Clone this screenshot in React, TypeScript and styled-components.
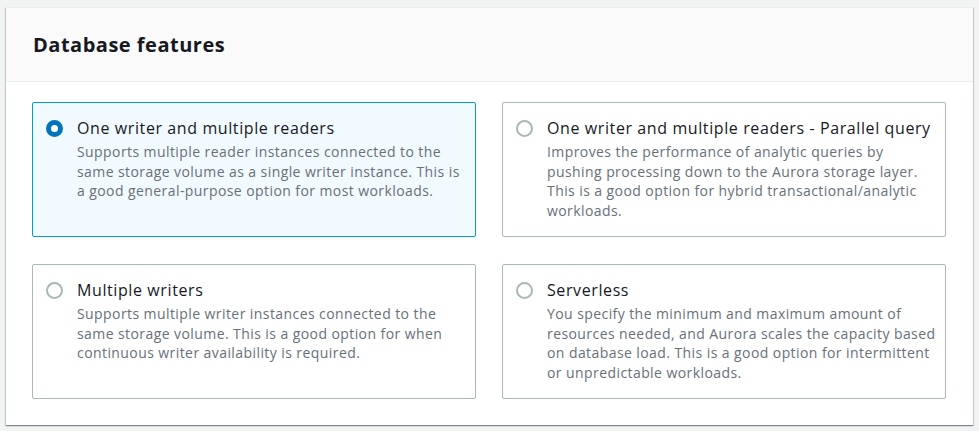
import React from "react";
import styled, { createGlobalStyle } from "styled-components";

const Global = createGlobalStyle`
  html, body { margin: 0; padding: 0; background: #f2f3f3; }
  body { font-family: "Open Sans", "Noto Sans", Arial, sans-serif; color: #16191f; }
  * { box-sizing: border-box; }
`;

const Page = styled.div`
  padding: 7px 6px;
`;

const Panel = styled.section`
  background: #fff;
  border-top: 1px solid #eaeded;
  box-shadow: 0 1px 1px 0 rgba(0, 28, 36, 0.3), 1px 1px 1px 0 rgba(0, 28, 36, 0.15),
    -1px 1px 1px 0 rgba(0, 28, 36, 0.15);
`;

const Header = styled.header`
  height: 74px;
  display: flex;
  align-items: center;
  padding: 0 27px;
  background: #fafafa;
  border-bottom: 1px solid #eaeded;
`;

const Title = styled.h2`
  margin: 0;
  font-size: 20px;
  font-weight: 700;
  letter-spacing: 0.5px;
  color: #16191f;
`;

const Grid = styled.div`
  display: grid;
  grid-template-columns: 444px 444px;
  column-gap: 26px;
  row-gap: 27px;
  padding: 20px 26px 26px;
`;

const Card = styled.label<{ $selected?: boolean }>`
  display: flex;
  align-items: flex-start;
  gap: 14px;
  height: 135px;
  padding: 14px 8px 14px 13px;
  border: 1px solid ${(p) => (p.$selected ? "#00a1c9" : "#aab7b8")};
  background: ${(p) => (p.$selected ? "#f1faff" : "#fff")};
  border-radius: 2px;
  cursor: pointer;
`;

const Radio = styled.span<{ $checked?: boolean }>`
  flex: none;
  width: 17px;
  height: 17px;
  margin-top: 2.5px;
  border-radius: 50%;
  background: #fff;
  border: ${(p) => (p.$checked ? "5px solid #0073bb" : "2px solid #aab7b8")};
`;

const Texts = styled.div`
  display: flex;
  flex-direction: column;
  flex: 1;
  min-width: 0;
`;

const OptionTitle = styled.div`
  font-size: 16px;
  line-height: 22px;
  letter-spacing: 0.6px;
  color: #16191f;
  margin-bottom: 3px;
`;

const OptionDesc = styled.div`
  font-size: 14px;
  line-height: 19.5px;
  letter-spacing: 0.42px;
  color: #687078;
`;

const options = [
  {
    title: "One writer and multiple readers",
    desc: "Supports multiple reader instances connected to the same storage volume as a single writer instance. This is a good general-purpose option for most workloads.",
    selected: true,
  },
  {
    title: "One writer and multiple readers - Parallel query",
    desc: "Improves the performance of analytic queries by pushing processing down to the Aurora storage layer. This is a good option for hybrid transactional/analytic workloads.",
  },
  {
    title: "Multiple writers",
    desc: "Supports multiple writer instances connected to the same storage volume. This is a good option for when continuous writer availability is required.",
  },
  {
    title: "Serverless",
    desc: "You specify the minimum and maximum amount of resources needed, and Aurora scales the capacity based on database load. This is a good option for intermittent or unpredictable workloads.",
  },
];

export default function App() {
  return (
    <>
      <Global />
      <Page>
        <Panel>
          <Header>
            <Title>Database features</Title>
          </Header>
          <Grid>
            {options.map((o) => (
              <Card key={o.title} $selected={o.selected}>
                <Radio $checked={o.selected} />
                <Texts>
                  <OptionTitle>{o.title}</OptionTitle>
                  <OptionDesc>{o.desc}</OptionDesc>
                </Texts>
              </Card>
            ))}
          </Grid>
        </Panel>
      </Page>
    </>
  );
}
